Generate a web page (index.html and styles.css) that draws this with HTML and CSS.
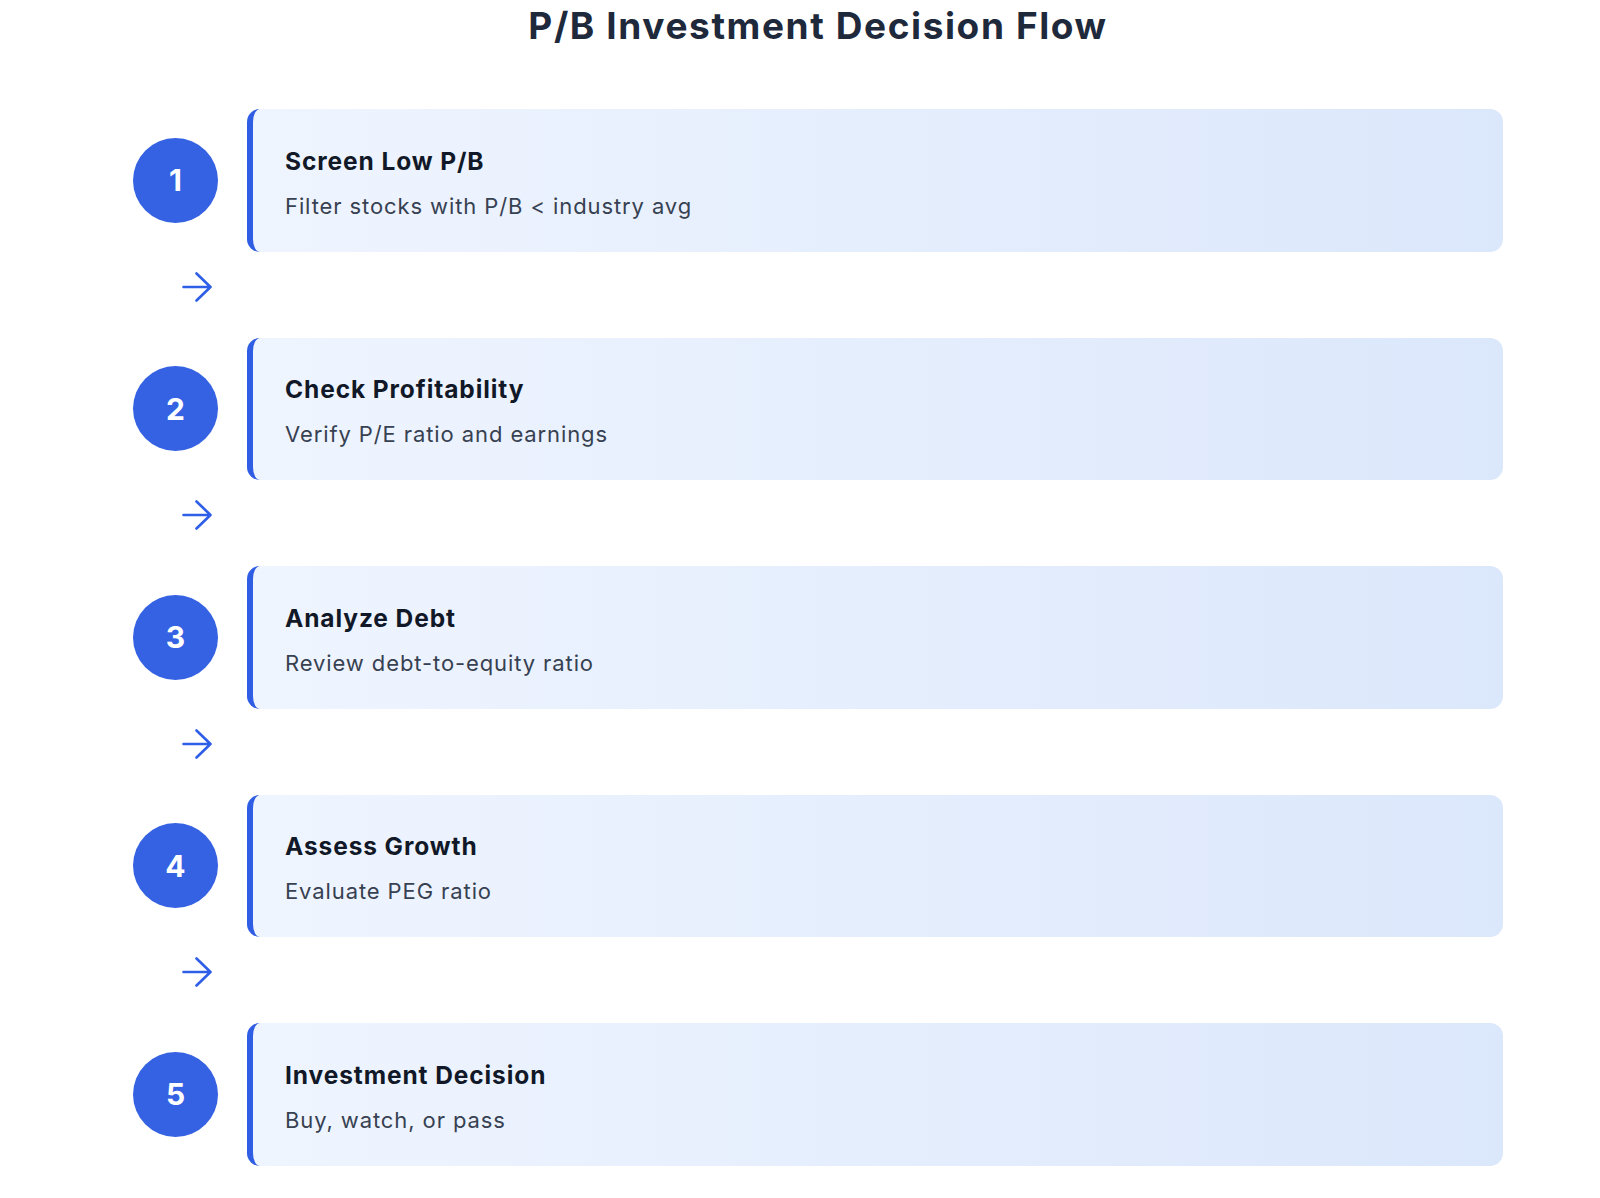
FILE: index.html
```html
<!DOCTYPE html>
<html lang="en">
<head>
<meta charset="utf-8">
<title>P/B Investment Decision Flow</title>
<link rel="stylesheet" href="styles.css">
</head>
<body>
<main class="page">
  <h1 class="title">P/B Investment Decision Flow</h1>
  <div class="flow">
    <div class="step">
      <div class="num">1</div>
      <div class="card">
        <h2 class="card-title">Screen Low P/B</h2>
        <p class="card-desc">Filter stocks with P/B &lt; industry avg</p>
      </div>
    </div>
    <div class="connector">
      <svg class="arrow" viewBox="0 0 30 30" width="30" height="30"><path d="M1.5 15H28.5M14.5 1.5L28.5 15L14.5 28.5"/></svg>
    </div>
    <div class="step">
      <div class="num">2</div>
      <div class="card">
        <h2 class="card-title">Check Profitability</h2>
        <p class="card-desc">Verify P/E ratio and earnings</p>
      </div>
    </div>
    <div class="connector">
      <svg class="arrow" viewBox="0 0 30 30" width="30" height="30"><path d="M1.5 15H28.5M14.5 1.5L28.5 15L14.5 28.5"/></svg>
    </div>
    <div class="step">
      <div class="num">3</div>
      <div class="card">
        <h2 class="card-title">Analyze Debt</h2>
        <p class="card-desc">Review debt-to-equity ratio</p>
      </div>
    </div>
    <div class="connector">
      <svg class="arrow" viewBox="0 0 30 30" width="30" height="30"><path d="M1.5 15H28.5M14.5 1.5L28.5 15L14.5 28.5"/></svg>
    </div>
    <div class="step">
      <div class="num">4</div>
      <div class="card">
        <h2 class="card-title">Assess Growth</h2>
        <p class="card-desc">Evaluate PEG ratio</p>
      </div>
    </div>
    <div class="connector">
      <svg class="arrow" viewBox="0 0 30 30" width="30" height="30"><path d="M1.5 15H28.5M14.5 1.5L28.5 15L14.5 28.5"/></svg>
    </div>
    <div class="step">
      <div class="num">5</div>
      <div class="card">
        <h2 class="card-title">Investment Decision</h2>
        <p class="card-desc">Buy, watch, or pass</p>
      </div>
    </div>
  </div>
</main>
</body>
</html>
```

FILE: styles.css
```css
html, body {
  margin: 0;
  padding: 0;
  background: #ffffff;
}

body {
  font-family: Inter, "Noto Sans", "Liberation Sans", sans-serif;
  color: #111827;
}

.page {
  padding: 4px 97px 40px 133px;
}

.title {
  margin: 0;
  font-size: 37px;
  line-height: 43px;
  font-weight: 700;
  color: #1e293b;
  text-align: center;
  letter-spacing: 1.6px;
}

.flow {
  margin-top: 62px;
  display: flex;
  flex-direction: column;
}

.step {
  display: flex;
  align-items: center;
  gap: 29px;
}

.num {
  flex: 0 0 85px;
  width: 85px;
  height: 85px;
  border-radius: 50%;
  background: #3562e2;
  color: #ffffff;
  font-size: 30px;
  font-weight: 700;
  display: flex;
  align-items: center;
  justify-content: center;
}

.card {
  flex: 1;
  box-sizing: border-box;
  height: 142.5px;
  padding: 7px 32px 0 32px;
  border-left: 6px solid #2f5de3;
  border-radius: 13px;
  background: linear-gradient(to right, #eff5ff, #dbe7fb);
  display: flex;
  flex-direction: column;
  justify-content: center;
}

.card-title {
  margin: 0;
  font-size: 24.5px;
  line-height: 32px;
  font-weight: 700;
  color: #111827;
  letter-spacing: 0.9px;
}

.card-desc {
  margin: 13px 0 0;
  font-size: 22px;
  line-height: 33px;
  font-weight: 400;
  color: #374151;
  letter-spacing: 0.9px;
}

.connector {
  height: 86px;
  box-sizing: border-box;
  padding: 20px 0 0 49px;
}

.arrow {
  display: block;
  fill: none;
  stroke: #2f5fe6;
  stroke-width: 2.6;
  stroke-linecap: round;
  stroke-linejoin: round;
}
```
